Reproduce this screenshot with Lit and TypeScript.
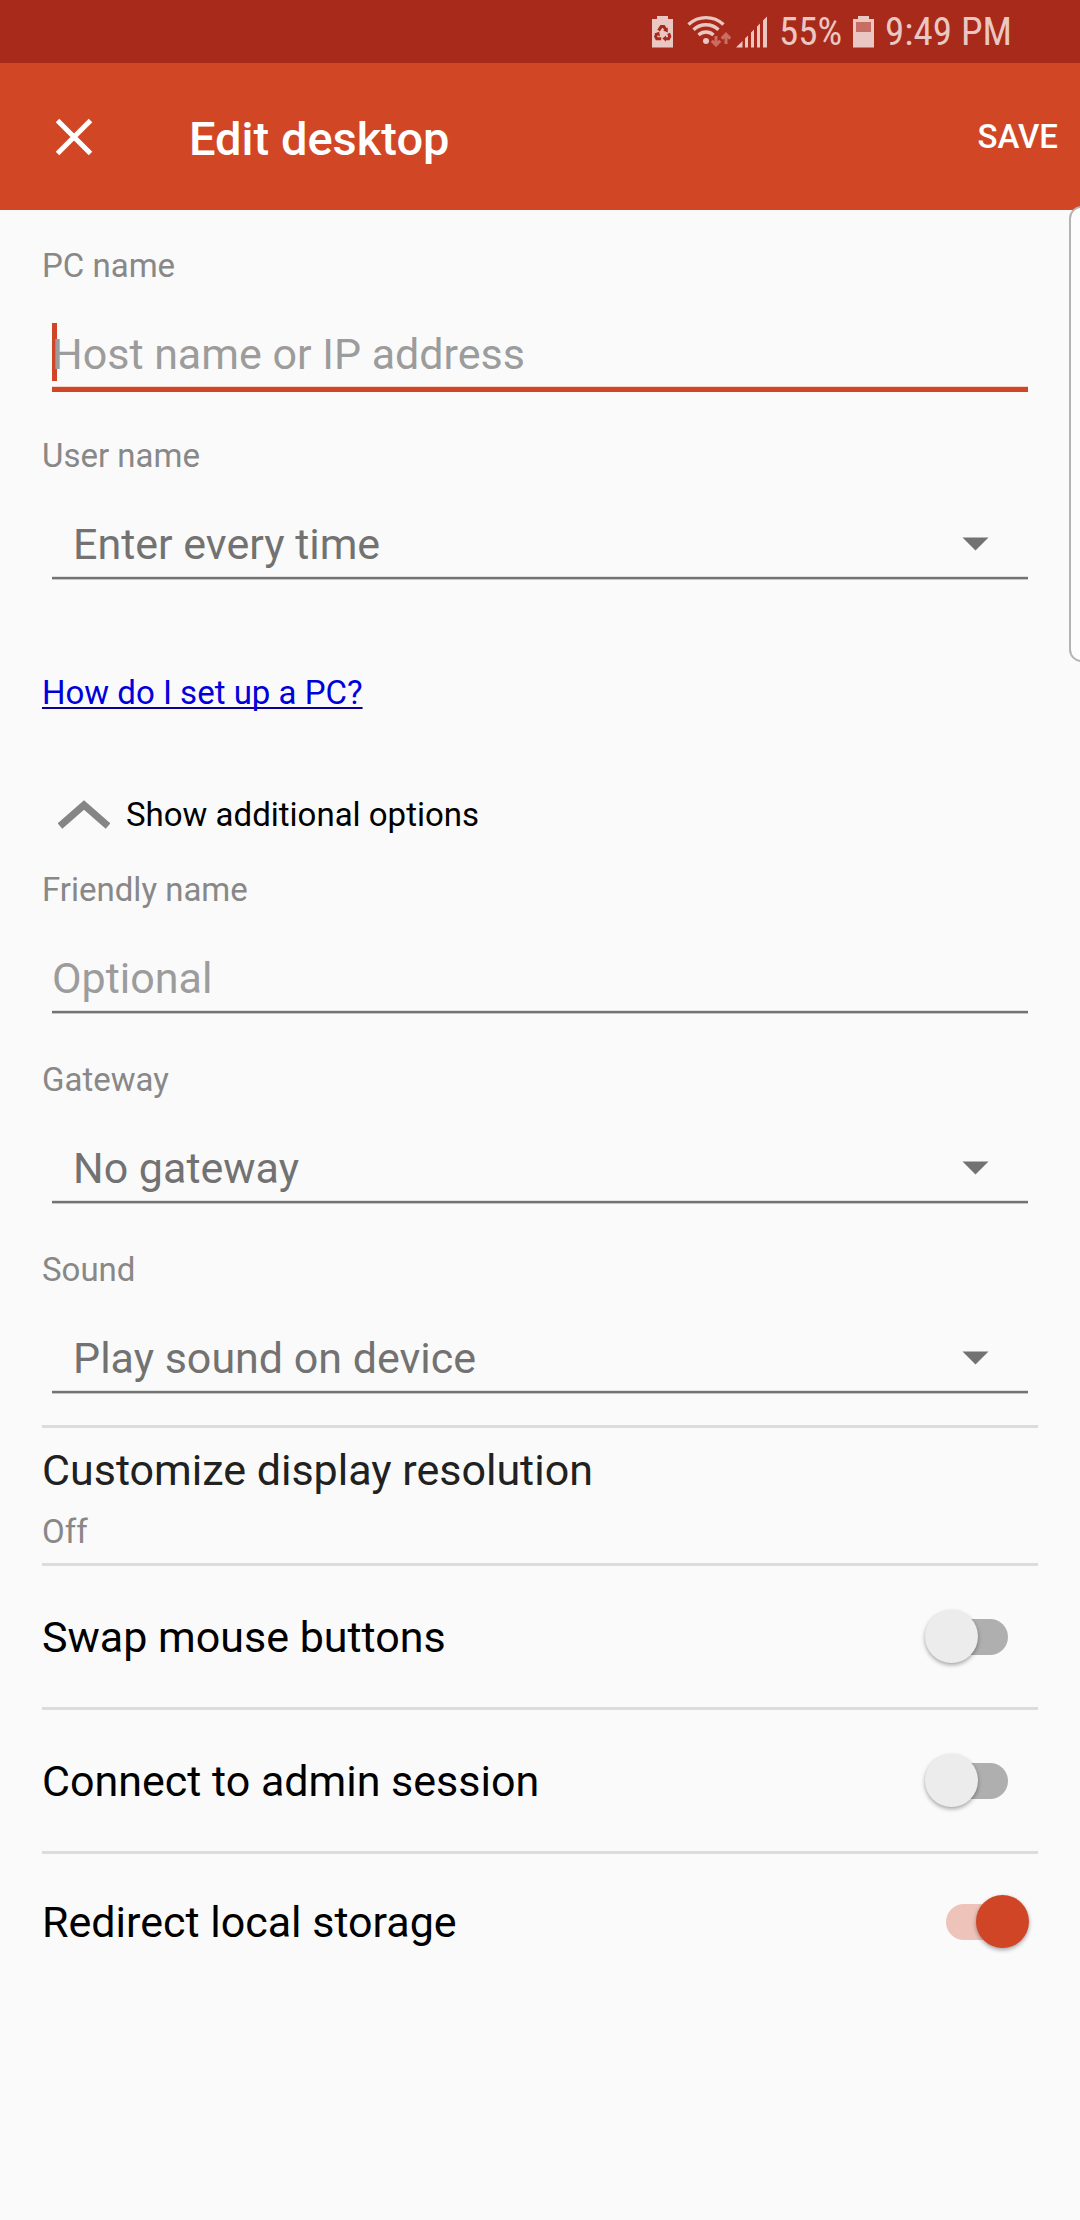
import { LitElement, html, css, svg } from "lit";
import { customElement, property, state } from "lit/decorators.js";

const FONT = css`Roboto, "Noto Sans", sans-serif`;

@customElement("status-bar")
export class StatusBar extends LitElement {
  static styles = css`
    :host {
      display: flex;
      align-items: center;
      justify-content: flex-end;
      gap: 11px;
      height: 63px;
      padding: 0 68px;
      background: #a82a1b;
      color: #eac7c2;
      font-family: "Roboto Condensed", ${FONT};
      font-size: 39px;
      line-height: 46px;
    }
    svg {
      display: block;
      flex: none;
      fill: currentColor;
    }
    .dim {
      fill: #c56e61;
    }
    .arrows {
      fill: none;
      stroke: #c96f62;
      stroke-width: 3;
    }
    .waves {
      fill: none;
      stroke: currentColor;
      stroke-width: 3.4;
    }
    .cycle {
      fill: none;
      stroke: #a82a1b;
      stroke-width: 3;
    }
    .heads {
      fill: #a82a1b;
    }
  `;

  private battery(inner: unknown) {
    return html`<svg width="21" height="34" viewBox="0 0 21 34" aria-hidden="true">
      <path d="M5 1h11v3h5v28.5H0V4h5z" />
      ${inner}
    </svg>`;
  }

  render() {
    return html`
      ${this.battery(svg`
        <path class="cycle" d="M6.6 15.6 9.2 11.6h2.6l2 3M4.8 18.6 3.6 21.4l1.2 2.4h4.4M16.6 18.4l1.2 3-1.2 2.4h-3" />
        <path class="heads" d="M15.8 12.6v5l-4.6-2zM2.4 18.4l4.8-1.6.8 4.6zM14 20.4v6.4l-3.6-3.2z" />
      `)}
      <svg width="84" height="34" viewBox="0 0 84 34" aria-hidden="true">
        <path class="waves" d="M4.5 9.5C14.5 .3 29.5 .3 39.5 9.5M9.5 14.7c7.2-6.6 17.8-6.6 25 0M14.5 20c4.3-4 10.7-4 15 0" />
        <circle cx="22" cy="26" r="3" />
        <path class="arrows" d="M32 21v9M27.8 25.8l4.2 4.4 4.2-4.4M42 29v-9M37.8 23.6l4.2-4.4 4.2 4.4" />
        <path d="M52 32.5 58.5 26v6.5zM61 32.5v-9l3-3v12zM67 32.5v-15l3-3v18zM73 32.5v-21l3-3v24zM79 32.5v-27l4-4v31z" />
      </svg>
      <span>55%</span>
      ${this.battery(svg`<path class="dim" d="M3 7h15v10H3z" />`)}
      <span>9:49 PM</span>
    `;
  }
}

@customElement("switch-row")
export class SwitchRow extends LitElement {
  @property() label = "";
  @property({ type: Boolean }) on = false;

  static styles = css`
    :host {
      display: block;
    }
    .row {
      display: flex;
      align-items: center;
      justify-content: space-between;
      height: 100%;
      padding-right: 9px;
      font-size: 43px;
      line-height: 50px;
      color: #000;
    }
    .switch {
      appearance: none;
      display: grid;
      align-items: center;
      flex: none;
      width: 104px;
      height: 53px;
      margin: 0;
    }
    .switch::before,
    .switch::after {
      content: "";
      grid-area: 1 / 1;
    }
    .switch::before {
      height: 36px;
      margin: 0 21px;
      border-radius: 18px;
      background: #afafaf;
    }
    .switch::after {
      width: 53px;
      height: 53px;
      border-radius: 50%;
      background: #ececec;
      box-shadow: 0 2px 4px rgba(0, 0, 0, 0.35);
    }
    .switch:checked::before {
      background: #eec3ba;
    }
    .switch:checked::after {
      justify-self: end;
      background: #cf4525;
    }
  `;

  render() {
    return html`<label class="row">
      <span>${this.label}</span>
      <input class="switch" type="checkbox" role="switch" .checked=${this.on} />
    </label>`;
  }
}

@customElement("app-root")
export class AppRoot extends LitElement {
  @state() private expanded = true;

  static styles = css`
    :host {
      display: block;
      position: relative;
      overflow: hidden;
      min-height: 100vh;
      background: #fafafa;
      font-family: ${FONT};
      font-size: 33px;
      line-height: 39px;
      color: #000;
    }
    button,
    input,
    select {
      font: inherit;
      color: inherit;
      background: none;
      border: 0;
      border-radius: 0;
      margin: 0;
      padding: 0;
      outline: none;
    }
    .bar {
      display: flex;
      align-items: center;
      height: 147px;
      padding: 0 22px 0 42px;
      background: #d14726;
      color: #fff;
    }
    .close {
      display: flex;
      width: 64px;
      height: 64px;
      align-items: center;
      justify-content: center;
    }
    .close svg {
      fill: none;
      stroke: #fff;
      stroke-width: 5;
    }
    .title {
      flex: 1;
      margin: 0 0 0 83px;
      padding-top: 4px;
      font-size: 47px;
      line-height: 56px;
      font-weight: 500;
    }
    .save {
      font-weight: 500;
    }
    .form {
      padding: 0 42px;
    }
    .field {
      display: flex;
      flex-direction: column;
      padding: 36px 0 11px;
    }
    .caption {
      color: #888;
    }
    .control {
      display: grid;
      align-items: center;
      margin: 0 10px;
      padding: 44px 0 8px;
      font-size: 43px;
      line-height: 50px;
      border-bottom: 2px solid #737373;
      box-shadow: 0 1px #c6c6c6, inset 0 -1px #e0e0e0;
    }
    .control > * {
      grid-area: 1 / 1;
    }
    .control.focused {
      border-color: #cf4525;
      box-shadow: 0 3px #cf4525, inset 0 -1px #f8d5cc;
    }
    .text {
      width: 100%;
      height: 50px;
      color: #212121;
    }
    .text::placeholder {
      color: #9c9c9c;
      opacity: 1;
    }
    .caret {
      width: 5px;
      height: 58px;
      margin: -6px 0 -2px;
      background: #cf4525;
    }
    .choice {
      appearance: none;
      width: 100%;
      height: 50px;
      padding: 0 90px 0 21px;
      color: #727272;
    }
    .arrow {
      justify-self: end;
      margin-right: 39px;
      fill: #727272;
      pointer-events: none;
    }
    .help {
      display: block;
      width: fit-content;
      margin-top: 83px;
      color: #0000dc;
      text-decoration: underline 2px #0b0096;
      text-underline-offset: 3px;
      text-decoration-skip-ink: none;
    }
    .more {
      display: flex;
      align-items: center;
      gap: 16px;
      margin-top: 83px;
      padding-left: 16px;
    }
    .chevron {
      fill: none;
      stroke: #858585;
      stroke-width: 7;
    }
    .list {
      margin-top: 21px;
    }
    .item {
      display: block;
      width: 100%;
      border-top: 3px solid #dcdcdc;
    }
    .resolution {
      display: flex;
      flex-direction: column;
      gap: 17px;
      padding: 17px 0 12px;
      text-align: left;
    }
    .heading {
      font-size: 43px;
      line-height: 50px;
      color: #212121;
    }
    .toggle {
      height: 141px;
    }
    .toggle:last-child {
      height: 135px;
    }
    .edge {
      position: absolute;
      top: 206px;
      right: -14px;
      width: 21px;
      height: 452px;
      border: 2px solid #b3b3b3;
      border-radius: 16px;
      background: #fdfdfd;
    }
  `;

  private select(id: string, caption: string, options: string[]) {
    return html`<div class="field">
      <label class="caption" for=${id}>${caption}</label>
      <div class="control">
        <select class="choice" id=${id}>
          ${options.map((o) => html`<option>${o}</option>`)}
        </select>
        <svg class="arrow" width="27" height="14" viewBox="0 0 27 14" aria-hidden="true">
          <path d="M.5 .5h26L13.5 13.5z" />
        </svg>
      </div>
    </div>`;
  }

  private input(id: string, caption: string, hint: string, focused = false) {
    return html`<div class="field">
      <label class="caption" for=${id}>${caption}</label>
      <div class="control ${focused ? "focused" : ""}">
        ${focused ? html`<span class="caret"></span>` : null}
        <input class="text" type="text" id=${id} placeholder=${hint} />
      </div>
    </div>`;
  }

  private options() {
    return html`
      ${this.input("friendly", "Friendly name", "Optional")}
      ${this.select("gateway", "Gateway", ["No gateway"])}
      ${this.select("sound", "Sound", ["Play sound on device"])}
      <div class="list">
        <button class="item resolution" type="button">
          <span class="heading">Customize display resolution</span>
          <span class="caption">Off</span>
        </button>
        <switch-row class="item toggle" label="Swap mouse buttons"></switch-row>
        <switch-row class="item toggle" label="Connect to admin session"></switch-row>
        <switch-row class="item toggle" label="Redirect local storage" on></switch-row>
      </div>
    `;
  }

  render() {
    return html`
      <status-bar></status-bar>
      <header class="bar">
        <button class="close" type="button" aria-label="Close">
          <svg width="38" height="38" viewBox="0 0 38 38" aria-hidden="true">
            <path d="M2.5 2.5l33 33M35.5 2.5l-33 33" />
          </svg>
        </button>
        <h1 class="title">Edit desktop</h1>
        <button class="save" type="button">SAVE</button>
      </header>
      <main class="form">
        ${this.input("pc", "PC name", "Host name or IP address", true)}
        ${this.select("user", "User name", ["Enter every time"])}
        <a class="help" href="#setup">How do I set up a PC?</a>
        <button
          class="more"
          type="button"
          aria-expanded=${this.expanded}
          @click=${() => (this.expanded = !this.expanded)}
        >
          <svg class="chevron" width="52" height="30" viewBox="0 0 52 30" aria-hidden="true">
            <path d="M2 26 26 5l24 21" />
          </svg>
          Show additional options
        </button>
        ${this.expanded ? this.options() : null}
      </main>
      <div class="edge"></div>
    `;
  }
}
